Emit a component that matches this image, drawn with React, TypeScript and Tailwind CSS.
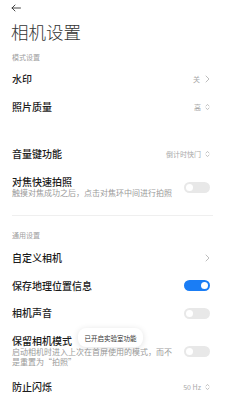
import React from "react";

const font = { fontFamily: '"Noto Sans CJK SC", "Noto Sans", sans-serif' };

function Chevron() {
  return (
    <svg width="5" height="8" viewBox="0 0 5 8" className="ml-[5px]">
      <path d="M1 1l3 3-3 3" fill="none" stroke="#b5b5b5" strokeWidth="0.9" strokeLinecap="round" strokeLinejoin="round" />
    </svg>
  );
}

function UpDown() {
  return (
    <svg width="5" height="8" viewBox="0 0 5 8" className="ml-[4px]">
      <path d="M1 3l1.5-1.6L4 3M1 5l1.5 1.6L4 5" fill="none" stroke="#b5b5b5" strokeWidth="0.8" strokeLinecap="round" strokeLinejoin="round" />
    </svg>
  );
}

function Toggle({ on }: { on?: boolean }) {
  return (
    <div
      className={`w-[26px] h-[11px] rounded-full flex items-center px-[2px] shrink-0 ${
        on ? "bg-[#1a7df5] justify-end" : "bg-[#e8e8e8] justify-start"
      }`}
    >
      <div className="w-[7px] h-[7px] rounded-full bg-white" />
    </div>
  );
}

function Row({ label, value, icon, toggle }: { label: string; value?: string; icon?: "chev" | "ud"; toggle?: "on" | "off" }) {
  return (
    <div className="h-[28px] flex items-center justify-between pl-[12px] pr-[15px]">
      <span className="text-[10px] leading-[12px] font-medium text-[#1c1c1c]">{label}</span>
      {toggle ? (
        <Toggle on={toggle === "on"} />
      ) : (
        <div className="flex items-center">
          {value && <span className="text-[7px] leading-[10px] text-[#a8a8a8]">{value}</span>}
          {icon === "chev" ? <Chevron /> : icon === "ud" ? <UpDown /> : null}
        </div>
      )}
    </div>
  );
}

function SubRow({ label, sub, pb }: { label: string; sub: string; pb: string }) {
  return (
    <div className={`flex items-center justify-between pl-[12px] pr-[15px] pt-[8px] ${pb}`}>
      <div className="w-[162px]">
        <div className="text-[10px] leading-[12px] font-medium text-[#1c1c1c]">{label}</div>
        <div className="text-[8px] leading-[10px] text-[#9a9a9a]">{sub}</div>
      </div>
      <Toggle />
    </div>
  );
}

export default function App() {
  return (
    <div className="w-[225px] h-[400px] overflow-hidden bg-white relative" style={font}>
      <div className="h-[16px] pl-[11px] flex items-center">
        <svg width="10" height="8" viewBox="0 0 10 8">
          <path d="M9.5 4H1M4 1L1 4l3 3" fill="none" stroke="#333" strokeWidth="0.9" strokeLinecap="round" strokeLinejoin="round" />
        </svg>
      </div>
      <div className="h-[32px] flex items-center pl-[11px]">
        <span className="text-[17.5px] leading-[20px] font-light text-[#333]">相机设置</span>
      </div>
      <div className="h-[17px] flex items-center pl-[12px]">
        <span className="text-[7px] leading-[10px] text-[#a0a0a0]">模式设置</span>
      </div>
      <Row label="水印" value="关" icon="chev" />
      <div className="h-[27px] flex items-center justify-between pl-[12px] pr-[15px]">
        <span className="text-[10px] leading-[12px] font-medium text-[#1c1c1c]">照片质量</span>
        <div className="flex items-center">
          <span className="text-[7px] leading-[10px] text-[#a8a8a8]">高</span>
          <UpDown />
        </div>
      </div>
      <div className="h-[20px]" />
      <Row label="音量键功能" value="倒计时快门" icon="ud" />
      <SubRow label="对焦快速拍照" sub="触摸对焦成功之后，点击对焦环中间进行拍照" pb="pb-[9px]" />
      <div className="mt-[8px] mx-[12px] border-t border-[#efefef]" />
      <div className="h-[28px] pl-[12px] pt-[14px]">
        <span className="block text-[7px] leading-[10px] text-[#a0a0a0]">通用设置</span>
      </div>
      <Row label="自定义相机" icon="chev" />
      <div className="h-[27px] flex items-center justify-between pl-[12px] pr-[15px]">
        <span className="text-[10px] leading-[12px] font-medium text-[#1c1c1c]">保存地理位置信息</span>
        <Toggle on />
      </div>
      <Row label="相机声音" toggle="off" />
      <SubRow label="保留相机模式" sub="启动相机时进入上次在首屏使用的模式，而不是重置为“拍照”" pb="pb-[6px]" />
      <Row label="防止闪烁" value="50 Hz" icon="ud" />

      <div className="absolute left-[78px] top-[328px] w-[65px] h-[19px] rounded-[8px] bg-white shadow-[0_1px_6px_rgba(0,0,0,0.12)] flex items-center justify-center">
        <span className="text-[6.5px] leading-[8px] text-[#333]">已开启实验室功能</span>
      </div>
    </div>
  );
}
